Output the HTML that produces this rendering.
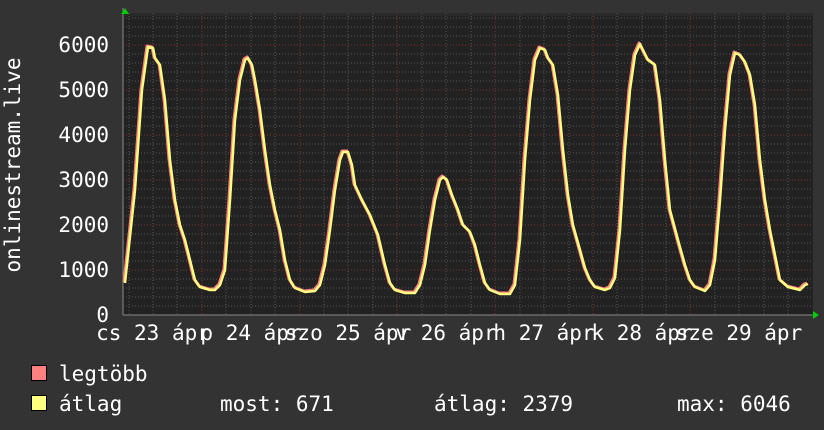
<!DOCTYPE html>
<html><head><meta charset="utf-8"><style>
html,body{margin:0;padding:0;background:#333;}
svg{display:block}
text{font-family:"DejaVu Sans Mono","Liberation Mono",monospace;fill:#fff;font-size:21px}
</style></head><body>
<svg width="824" height="430" viewBox="0 0 824 430" xmlns="http://www.w3.org/2000/svg">
<rect width="824" height="430" fill="#333"/>
<rect x="123" y="13" width="690" height="302" fill="#222"/>
<rect x="123" y="13" width="690" height="3" fill="#2a2a2a"/>
<g stroke="#555" stroke-width="1" stroke-dasharray="1,2">
<path d="M123 306H812M123 297H812M123 288H812M123 279H812M123 261H812M123 252H812M123 243H812M123 234H812M123 216H812M123 207H812M123 198H812M123 189H812M123 171H812M123 162H812M123 153H812M123 144H812M123 126H812M123 117H812M123 108H812M123 99H812M123 81H812M123 72H812M123 63H812M123 54H812M123 36H812M123 27H812M123 18H812"/>
<path d="M129 13V315M153 13V315M177 13V315M226 13V315M251 13V315M275 13V315M324 13V315M348 13V315M373 13V315M422 13V315M446 13V315M471 13V315M520 13V315M544 13V315M569 13V315M617 13V315M642 13V315M666 13V315M715 13V315M739 13V315M764 13V315M788 13V315"/>
</g>
<g stroke="#7a3333" stroke-width="1" stroke-dasharray="1,2">
<path d="M123 270H812M123 225H812M123 180H812M123 135H812M123 90H812M123 45H812"/>
<path d="M202 13V315M300 13V315M397 13V315M495 13V315M593 13V315M690 13V315"/>
</g>
<path d="M123 315H815M123 315V8" stroke="#888" stroke-width="1"/>
<polygon points="125,8 121,14 129,14" fill="#0c0"/>
<polygon points="819,315 813,311 813,319" fill="#0c0"/>
<g fill="none" stroke-linejoin="round">
<polyline stroke="#ff8080" stroke-width="3" transform="translate(-1,-1)" points="125,283 135,190 142,90 148,47 153,48 155,58 160,65 165,100 170,160 175,200 180,225 185,240 190,260 195,280 200,287 210,290 215,290 220,285 225,270 230,200 235,120 240,80 245,60 248,58 252,65 255,80 260,110 265,150 270,185 275,210 280,230 285,260 290,280 295,288 305,292 315,291 320,285 325,265 330,230 335,190 340,160 343,152 348,152 352,165 355,185 362,200 370,215 378,235 385,265 390,283 395,290 405,293 415,293 420,285 425,265 430,230 435,200 440,180 443,177 447,180 452,195 458,210 463,225 470,232 475,245 480,265 485,283 490,290 500,294 510,294 515,285 520,240 525,160 530,100 535,60 540,48 545,50 548,58 553,65 558,95 563,150 568,195 573,225 580,250 585,268 590,280 595,287 605,290 610,288 615,278 620,230 625,150 630,90 635,55 640,44 643,50 648,60 655,65 660,100 665,160 670,210 678,240 685,265 690,280 695,287 705,291 710,285 715,260 720,200 725,130 730,75 735,53 740,55 745,62 750,75 755,105 760,160 765,200 770,230 775,255 780,280 788,287 800,290 805,285 808,284"/>
<polyline stroke="#ffff80" stroke-width="2.5" points="125,283 135,190 142,90 148,47 153,48 155,58 160,65 165,100 170,160 175,200 180,225 185,240 190,260 195,280 200,287 210,290 215,290 220,285 225,270 230,200 235,120 240,80 245,60 248,58 252,65 255,80 260,110 265,150 270,185 275,210 280,230 285,260 290,280 295,288 305,292 315,291 320,285 325,265 330,230 335,190 340,160 343,152 348,152 352,165 355,185 362,200 370,215 378,235 385,265 390,283 395,290 405,293 415,293 420,285 425,265 430,230 435,200 440,180 443,177 447,180 452,195 458,210 463,225 470,232 475,245 480,265 485,283 490,290 500,294 510,294 515,285 520,240 525,160 530,100 535,60 540,48 545,50 548,58 553,65 558,95 563,150 568,195 573,225 580,250 585,268 590,280 595,287 605,290 610,288 615,278 620,230 625,150 630,90 635,55 640,44 643,50 648,60 655,65 660,100 665,160 670,210 678,240 685,265 690,280 695,287 705,291 710,285 715,260 720,200 725,130 730,75 735,53 740,55 745,62 750,75 755,105 760,160 765,200 770,230 775,255 780,280 788,287 800,290 805,285 808,284"/>
</g>
<g text-anchor="end">
<text x="109" y="322">0</text>
<text x="109" y="277">1000</text>
<text x="109" y="232">2000</text>
<text x="109" y="187">3000</text>
<text x="109" y="142">4000</text>
<text x="109" y="97">5000</text>
<text x="109" y="52">6000</text>
</g>
<text transform="translate(20,165) rotate(-90)" text-anchor="middle">onlinestream.live</text>
<g text-anchor="middle">
<text x="153" y="340">cs 23 ápr</text>
<text x="251" y="340">p 24 ápr</text>
<text x="348" y="340">szo 25 ápr</text>
<text x="446" y="340">v 26 ápr</text>
<text x="544" y="340">h 27 ápr</text>
<text x="642" y="340">k 28 ápr</text>
<text x="739" y="340">sze 29 ápr</text>
</g>
<rect x="31.5" y="365.5" width="15" height="15" fill="#ff8080" stroke="#000"/>
<rect x="31.5" y="395.5" width="15" height="15" fill="#ffff80" stroke="#000"/>
<text x="59" y="381">legtöbb</text>
<text x="59" y="411">átlag</text>
<text x="220" y="411">most: 671</text>
<text x="434" y="411">átlag: 2379</text>
<text x="677" y="411">max: 6046</text>
</svg>
</body></html>
